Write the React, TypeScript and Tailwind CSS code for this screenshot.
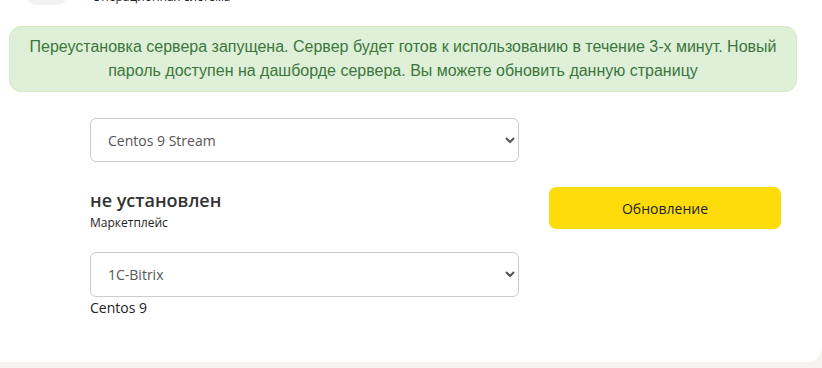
import { useState } from 'react';

export default function App() {
  const [os, setOs] = useState('centos9stream');
  const [app, setApp] = useState('bitrix');

  return (
    <div className="h-[368px] overflow-hidden bg-[#f4f3f2] font-['Open_Sans',sans-serif] text-[#333]">
      <div className="-mt-[50px] w-[822px] rounded-br-[14px] bg-white">
        {/* Header (scrolled off) */}
        <div className="flex items-end">
          <div className="ml-[25px] h-[55px] w-[43px] rounded-[12px] bg-[#f4f3f2]" />
          <p className="mb-[1px] ml-[24px] text-[12px] leading-[15px] text-[#222]">
            Операционная система
          </p>
        </div>

        {/* Alert */}
        <div className="ml-[9px] mt-[21px] w-[788px] rounded-[12px] border border-[#d6e9c6] bg-[#dff0d8] px-4 py-2 text-center font-['Liberation_Sans',Arial,sans-serif] text-[16px] leading-[24px] text-[#3c763d]">
          Переустановка сервера запущена. Сервер будет готов к использованию в течение 3-х минут. Новый
          пароль доступен на дашборде сервера. Вы можете обновить данную страницу
        </div>

        <div className="ml-[90px] mt-[26px] w-[691px]">
          <select
            value={os}
            onChange={(e) => setOs(e.target.value)}
            className="h-[44px] w-[429px] rounded-[6px] border border-[#ccc] bg-white pl-[13px] pr-2 text-[14px] text-[#555] outline-none"
          >
            <option value="centos9stream">Centos 9 Stream</option>
            <option value="centos8">Centos 8</option>
            <option value="ubuntu">Ubuntu 22.04</option>
          </select>

          <div className="mt-[26px] flex items-start justify-between">
            <div>
              <h2 className="text-[18px] font-semibold leading-[24px] text-[#333]">не установлен</h2>
              <p className="mt-[3px] text-[12px] leading-[16px] text-[#222]">Маркетплейс</p>
            </div>
            <button className="mt-[-1px] h-[42px] w-[232px] rounded-[7px] bg-[#fedb0b] text-[14px] text-[#222]">
              Обновление
            </button>
          </div>

          <select
            value={app}
            onChange={(e) => setApp(e.target.value)}
            className="mt-[21px] h-[45px] w-[429px] rounded-[6px] border border-[#ccc] bg-white pl-[13px] pr-2 text-[14px] text-[#555] outline-none"
          >
            <option value="bitrix">1C-Bitrix</option>
            <option value="wordpress">WordPress</option>
          </select>
          <p className="mt-[1px] text-[14px] leading-[20px] text-[#222]">Centos 9</p>
        </div>
        <div className="h-[44px]" />
      </div>
    </div>
  );
}
